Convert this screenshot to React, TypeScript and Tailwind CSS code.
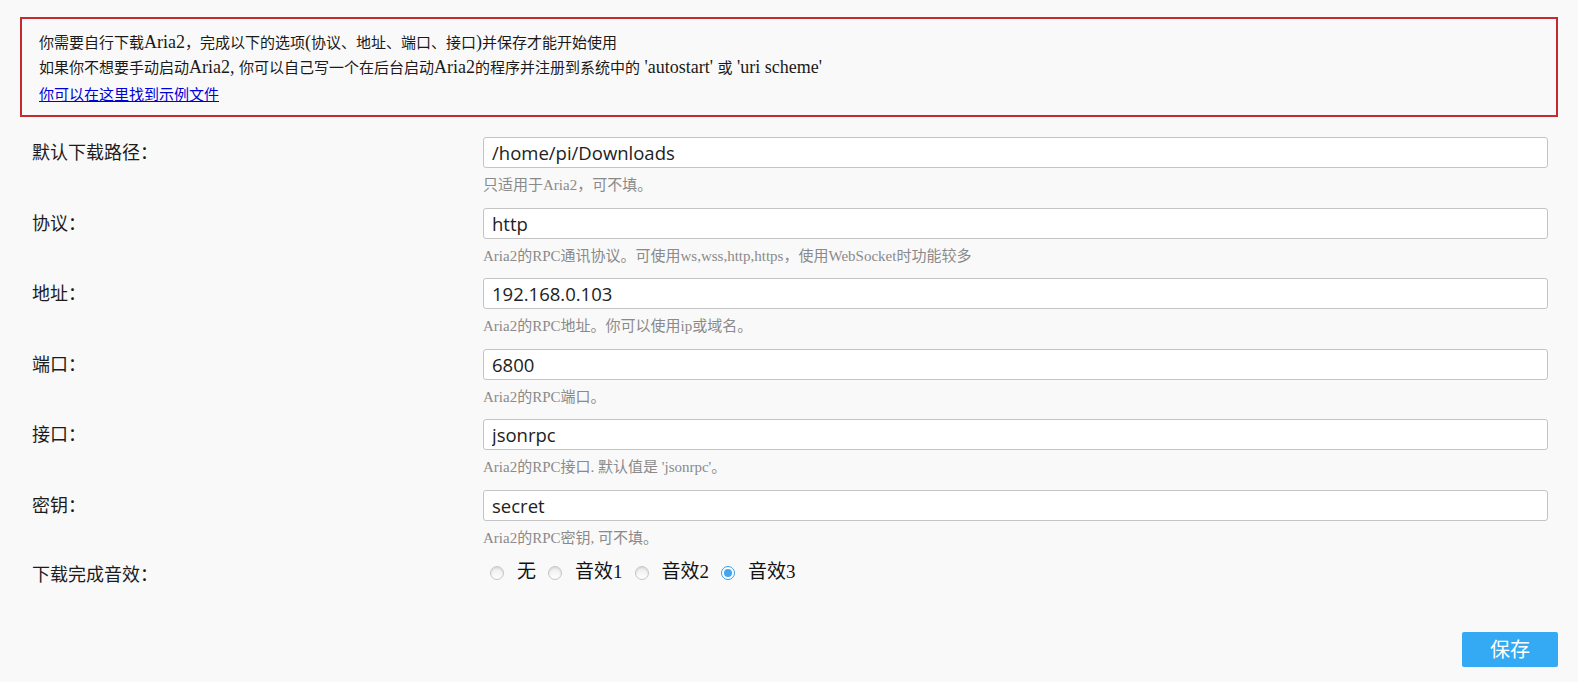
import { useState } from "react";

const fields = [
  { label: "默认下载路径：", value: "/home/pi/Downloads", help: "只适用于Aria2，可不填。" },
  { label: "协议：", value: "http", help: "Aria2的RPC通讯协议。可使用ws,wss,http,https，使用WebSocket时功能较多" },
  { label: "地址：", value: "192.168.0.103", help: "Aria2的RPC地址。你可以使用ip或域名。" },
  { label: "端口：", value: "6800", help: "Aria2的RPC端口。" },
  { label: "接口：", value: "jsonrpc", help: "Aria2的RPC接口. 默认值是 'jsonrpc'。" },
  { label: "密钥：", value: "secret", help: "Aria2的RPC密钥, 可不填。" },
];

const sounds = ["无", "音效1", "音效2", "音效3"];

const serif = "font-['Liberation_Serif','Noto_Sans_CJK_SC',serif]";

// latin runs in the notice render a bit larger than the CJK around them
function L({ children }: { children: string }) {
  return <span className="text-[18px] leading-[20px]">{children}</span>;
}

export default function App() {
  const [sound, setSound] = useState(3);

  return (
    <div className="min-h-screen w-full bg-[#f9f9f9] px-[20px] pt-[17px] text-[#1c1c1c]">
      <div className={`border-2 border-[#c42a2f] pl-[17px] pt-[12px] pb-[7px] text-[15px] leading-[25px] text-[#1a1a1a] ${serif}`}>
        <p>
          你需要自行下载<L>Aria2</L>，完成以下的选项<L>(</L>协议、地址、端口、接口<L>)</L>并保存才能开始使用
        </p>
        <p>
          如果你不想要手动启动<L>Aria2, </L>你可以自己写一个在后台启动<L>Aria2</L>的程序并注册到系统中的
          <L>{" 'autostart' "}</L>或<L>{" 'uri scheme'"}</L>
        </p>
        <a href="#" className="mt-[2px] block w-fit text-[#0000d8] underline">
          你可以在这里找到示例文件
        </a>
      </div>

      <div className="mt-[20px] flex flex-col gap-[13.5px] pr-[10px]">
        {fields.map((f) => (
          <div key={f.label} className="flex">
            <label className="w-[463px] shrink-0 pl-[12px] font-['Noto_Sans_CJK_SC',sans-serif] text-[18px] leading-[28px]">
              {f.label}
            </label>
            <div className="flex-1">
              <input
                defaultValue={f.value}
                className="block h-[31px] w-full rounded-[3px] border border-[#c4c4c4] bg-white px-[8px] font-['Open_Sans',sans-serif] text-[18.5px] text-[#222] outline-none"
              />
              <div className={`pt-[8px] text-[15px] leading-[18px] text-[#8a8a8a] ${serif}`}>{f.help}</div>
            </div>
          </div>
        ))}
      </div>

      <div className="mt-[14px] flex h-[24px] items-center">
        <span className="w-[463px] shrink-0 pl-[12px] font-['Noto_Sans_CJK_SC',sans-serif] text-[18px] leading-[24px]">
          下载完成音效：
        </span>
        <div className={`flex items-center pl-[7px] text-[19px] ${serif}`}>
          {sounds.map((s, i) => (
            <label
              key={s}
              onClick={() => setSound(i)}
              className={`flex cursor-pointer items-center ${i > 0 ? "ml-[12px]" : ""}`}
            >
              {sound === i ? (
                <span className="mr-[13px] flex h-[14px] w-[14px] shrink-0 items-center justify-center rounded-full border border-[#3a9be0] bg-white">
                  <span className="h-[8px] w-[8px] rounded-full bg-[#41a6f0]" />
                </span>
              ) : (
                <span className="mr-[13px] h-[14px] w-[14px] shrink-0 rounded-full border border-[#c6c6c6] bg-gradient-to-b from-[#ececec] to-white shadow-[inset_0_1px_2px_rgba(0,0,0,0.12)]" />
              )}
              <span className="text-[#111]">{s}</span>
            </label>
          ))}
        </div>
      </div>

      <div className="mt-[47px] flex justify-end">
        <button className="h-[35px] w-[96px] rounded-[2px] bg-[#33aaf3] font-['Noto_Sans_CJK_SC',sans-serif] text-[20px] text-white">
          保存
        </button>
      </div>
    </div>
  );
}
